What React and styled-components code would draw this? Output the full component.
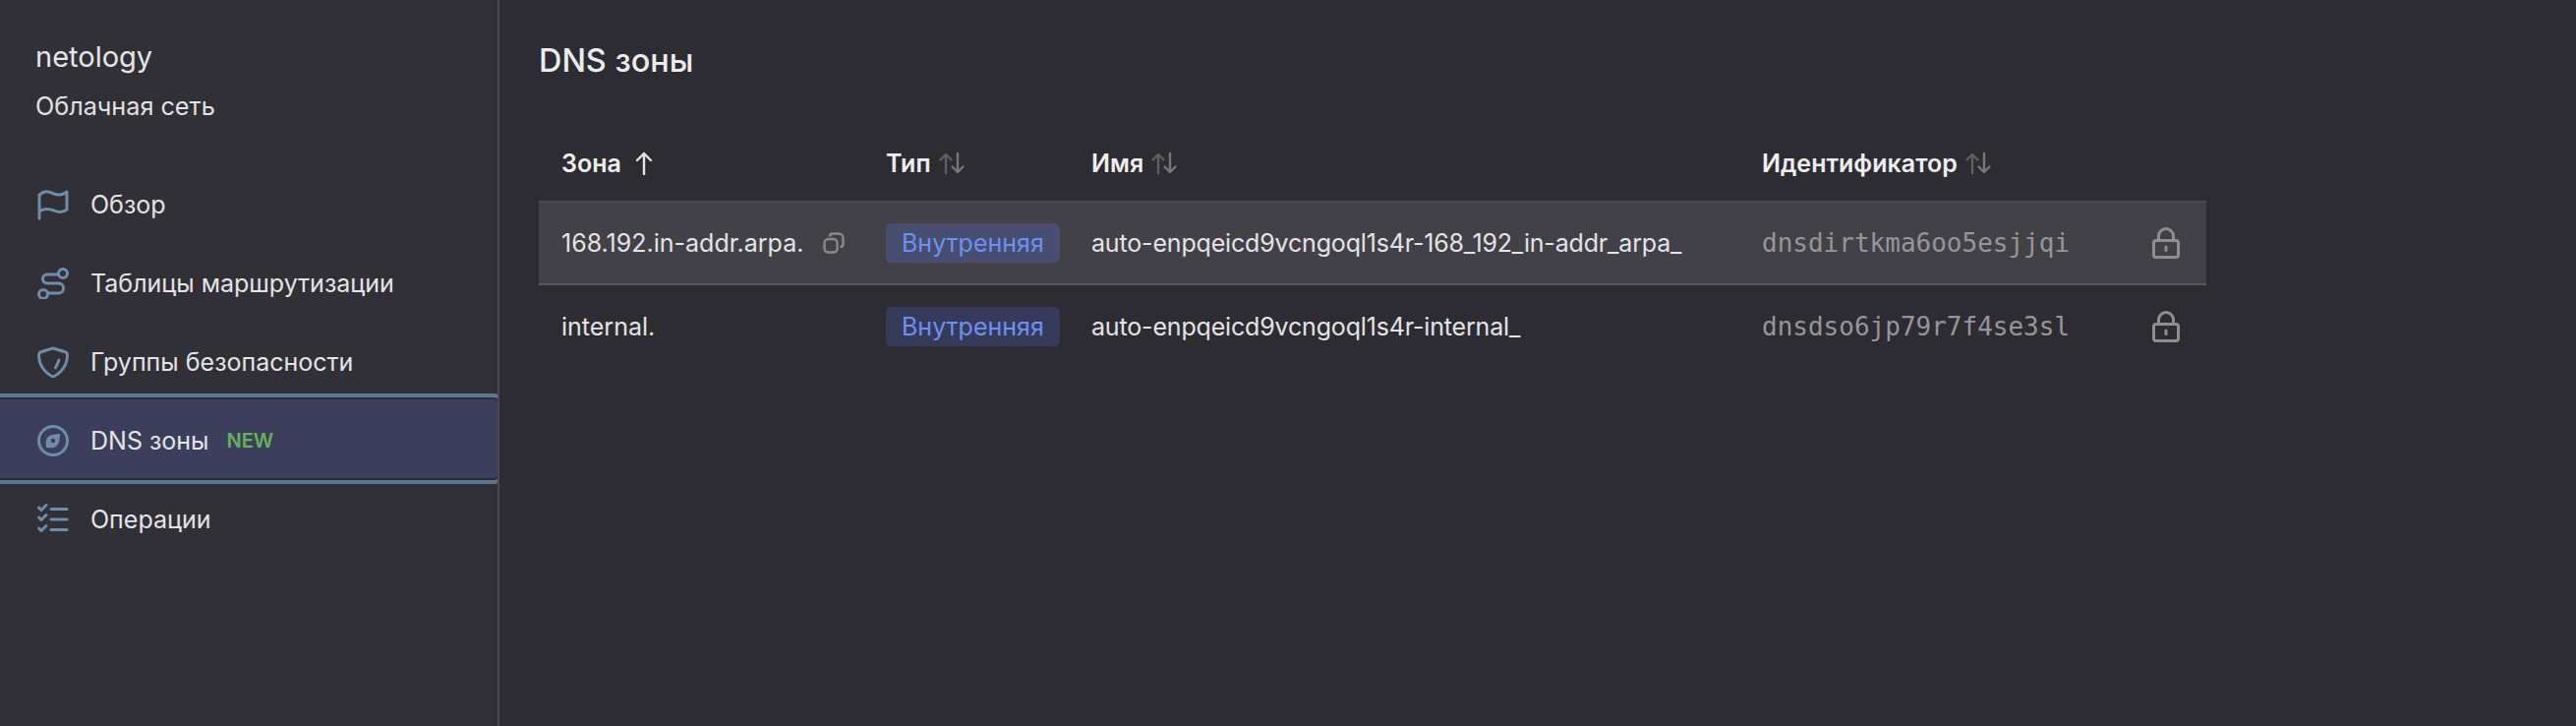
import React from "react";
import styled, { createGlobalStyle } from "styled-components";

const Global = createGlobalStyle`
  html, body { margin: 0; padding: 0; height: 100%; background: #2d2c33; }
  #root { height: 100%; }
`;
const FONT = `Inter, "Noto Sans", sans-serif`;

const Page = styled.div`
  display: flex; width: 2620px; height: 738px; overflow: hidden;
  font-family: ${FONT}; font-size: 25px; color: #e4e4e6; background: #2d2c33;
`;
const Sidebar = styled.aside`
  box-sizing: content-box; width: 506px; height: 738px; flex: none; overflow: hidden;
  background: #313036; border-right: 2px solid #48484e;
`;
const Brand = styled.div`
  padding: 38px 36px 0; height: 130px; box-sizing: border-box; margin-bottom: 38px;
`;
const Org = styled.div`font-size: 29px; line-height: 40px; color: #e6e6e8; margin-bottom: 12px;`;
const Service = styled.div`font-size: 25.2px; line-height: 36px; color: #e2e2e4;`;
const Nav = styled.nav`display: flex; flex-direction: column;`;
const Item = styled.div`
  position: relative; isolation: isolate;
  display: flex; align-items: center; height: 80px; padding-left: 38px; gap: 22px;
  ${p => p.$active && `
    &::before {
      content: ""; position: absolute; z-index: -1; left: -12px; right: 0; top: -2px; bottom: 2px;
      background: #3b3f5c; border-radius: 4px;
      box-shadow: 0 0 0 2px #2c2c32, 0 0 0 6px #5a7890;
    }
  `}
`;
const ItemLabel = styled.span`line-height: 32px;`;
const New = styled.span`color: #66b05a; font-size: 20px; font-weight: 600; margin-left: -4px;`;
const Icon = styled.svg`
  width: 32px; height: 32px; flex: none; fill: none; stroke: #6d8dab; stroke-width: 3;
  stroke-linecap: round; stroke-linejoin: round;
`;
const Main = styled.main`flex: 1; padding: 0 40px 0 39px;`;
const Title = styled.h1`
  margin: 0 0 0 1px; padding-top: 42px; height: 128px; box-sizing: border-box;
  font-size: 32.4px; line-height: 40px; font-weight: 500; color: #ececee;
`;
const Table = styled.div`width: 1696px; margin-left: 1px;`;
const Row = styled.div`
  display: grid; grid-template-columns: 330px 209px 682px 395px 80px; align-items: center;
  box-sizing: border-box; height: ${p => p.$h}px;
  ${p => p.$hover && `background: #424147; border-top: 2px solid #49494f; border-bottom: 2px solid #56565b;`}
`;
const Cell = styled.div`display: flex; align-items: center; padding-left: 23px; min-width: 0; white-space: nowrap;`;
const NameCell = styled(Cell)`letter-spacing: -0.17px;`;
const LockCell = styled(Cell)`padding-left: 25px;`;
const Head = styled(Cell)`font-weight: 600; color: #eeeeef; gap: 8px;`;
const Badge = styled.span`
  display: inline-block; padding: 0 16px; height: 40px; line-height: 40px; border-radius: 6px;
  color: #6d90f4; background: ${p => p.$hover ? "#484e6f" : "#373b5a"};
`;
const Mono = styled.span`font-family: "DejaVu Sans Mono", monospace; font-size: 26px; color: #96969a;`;
const CopyIcon = styled.svg`width: 22px; height: 22px; margin-left: 20px; fill: none; stroke: #8a8a8e; stroke-width: 2.4;`;
const LockIcon = styled.svg`width: 28px; height: 32px; fill: none; stroke: #8f8f93; stroke-width: 3; stroke-linecap: round;`;
const SortIcon = styled.svg`width: 26px; height: 24px; fill: none; stroke-width: 2.4; stroke-linecap: round; stroke-linejoin: round;`;
const SortedUpIcon = styled(SortIcon)`margin-left: 2px;`;

const Flag = () => (
  <Icon viewBox="0 0 32 32">
    <path d="M2 30V6C8 1 12 3 17 5c5 2 9 1 13-2v18c-4 3-9 3-13 1-5-2-10-3-15 1" />
  </Icon>
);
const Route = () => (
  <Icon viewBox="0 0 32 32">
    <circle cx="26" cy="6" r="4.5" />
    <circle cx="6" cy="27" r="4.5" />
    <path d="M21.5 7H10c-6 0-6 9 0 9h12c6 0 6 10 0 10h-11" />
  </Icon>
);
const Shield = () => (
  <Icon viewBox="0 0 32 32">
    <path d="M16 2l11.500 3.500c2 .6 3 1.500 3 3.500 0 10-6 18-14.500 22C7.500 27 1.500 19 1.500 9c0-2 1-2.900 3-3.500z" />
    <path d="M22 14l-3.500 8" />
  </Icon>
);
const Compass = () => (
  <Icon viewBox="0 0 32 32">
    <circle cx="16" cy="16" r="14.500" />
    <path d="M23 9c-5 0-11 1-13 4-2 3-1 6-1 10 4 0 7 1 10-1 3-2 4-8 4-13z" fill="#6d8dab" stroke="none" />
    <circle cx="16" cy="16" r="2.200" fill="#3b3f5c" stroke="none" />
  </Icon>
);
const Checks = () => (
  <Icon viewBox="0 0 32 32">
    <path d="M1.500 4l2.500 2.500L9 1.500M1.500 14l2.500 2.500L9 11.500M1.500 25l2.500 2.500L9 22.500" />
    <path d="M14 5.500h16M14 16h16M14 26.500h16" />
  </Icon>
);
const Sort = () => (
  <SortIcon viewBox="0 0 26 24">
    <path d="M7 22V3M1.500 8.500L7 3l5.500 5.500" stroke="#5f5f64" />
    <path d="M19 2v19M13.500 15.500L19 21l5.500-5.500" stroke="#77777b" />
  </SortIcon>
);
const SortedUp = () => (
  <SortedUpIcon viewBox="0 0 26 24">
    <path d="M13 23V2M6 9l7-7 7 7" stroke="#e4e4e6" />
  </SortedUpIcon>
);
const Copy = () => (
  <CopyIcon viewBox="0 0 22 22">
    <rect x="1.500" y="7" width="13" height="13.500" rx="4" />
    <path d="M7 4.500C7 2.500 8.500 1.500 10 1.500h6c2.500 0 4.500 2 4.500 4.500v5.500c0 2-1 3.500-3 3.500" />
  </CopyIcon>
);
const Lock = () => (
  <LockIcon viewBox="0 0 28 32">
    <rect x="1.500" y="13.500" width="25" height="17" rx="2.500" />
    <path d="M6.500 13.500V9a7.500 7.500 0 0 1 15 0v4.500" />
    <path d="M14 20v3.500" />
  </LockIcon>
);

const nav = [
  { icon: <Flag />, label: "Обзор" },
  { icon: <Route />, label: "Таблицы маршрутизации" },
  { icon: <Shield />, label: "Группы безопасности" },
  { icon: <Compass />, label: "DNS зоны", active: true, tag: "NEW" },
  { icon: <Checks />, label: "Операции" },
];
const rows = [
  { zone: "168.192.in-addr.arpa.", name: "auto-enpqeicd9vcngoql1s4r-168_192_in-addr_arpa_", id: "dnsdirtkma6oo5esjjqi", hover: true, h: 86 },
  { zone: "internal.", name: "auto-enpqeicd9vcngoql1s4r-internal_", id: "dnsdso6jp79r7f4se3sl", h: 84 },
];

export default function App() {
  return (
    <Page>
      <Global />
      <Sidebar>
        <Brand>
          <Org>netology</Org>
          <Service>Облачная сеть</Service>
        </Brand>
        <Nav>
          {nav.map(n => (
            <Item key={n.label} $active={n.active}>
              {n.icon}
              <ItemLabel>{n.label}</ItemLabel>
              {n.tag && <New>{n.tag}</New>}
            </Item>
          ))}
        </Nav>
      </Sidebar>
      <Main>
        <Title>DNS зоны</Title>
        <Table>
          <Row $h={76}>
            <Head>Зона <SortedUp /></Head>
            <Head>Тип <Sort /></Head>
            <Head>Имя <Sort /></Head>
            <Head>Идентификатор <Sort /></Head>
            <Cell />
          </Row>
          {rows.map(r => (
            <Row key={r.id} $h={r.h} $hover={r.hover}>
              <Cell>{r.zone}{r.hover && <Copy />}</Cell>
              <Cell><Badge $hover={r.hover}>Внутренняя</Badge></Cell>
              <NameCell>{r.name}</NameCell>
              <Cell><Mono>{r.id}</Mono></Cell>
              <LockCell><Lock /></LockCell>
            </Row>
          ))}
        </Table>
      </Main>
    </Page>
  );
}
